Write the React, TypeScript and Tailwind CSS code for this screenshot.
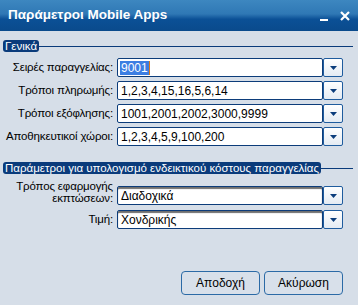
import React from "react";

const font = { fontFamily: '"Liberation Sans", Arial, sans-serif' };

function DropButton() {
  return (
    <div className="w-[20px] h-full flex items-center justify-center border border-[#1f5c9e] rounded-[2px] bg-[linear-gradient(180deg,#ffffff_0%,#e4ebf3_100%)]">
      <svg width="7" height="4" viewBox="0 0 7 4">
        <path d="M0 0 H7 L3.5 4 Z" fill="#0b3d7c" />
      </svg>
    </div>
  );
}

function Combo({
  value,
  selected,
  shaded,
}: {
  value: string;
  selected?: boolean;
  shaded?: boolean;
}) {
  return (
    <div className="flex h-[19px] w-[226px]">
      <div
        className={
          "flex-1 flex items-center pl-[2px] bg-white border border-[#0c3c7a] rounded-[2px] text-[12px] text-black " +
          (shaded ? "shadow-[inset_0_2px_1px_#6f6f6f]" : "")
        }
      >
        {selected ? (
          <>
            <span className="bg-[#3c7ee2] text-white leading-[14px] px-[1px]">{value}</span>
            <span className="w-[1px] h-[14px] bg-[#d9771c]" />
          </>
        ) : (
          <span className="leading-[14px] pl-[1px]">{value}</span>
        )}
      </div>
      <DropButton />
    </div>
  );
}

function Row({
  label,
  children,
  tall,
}: {
  label: React.ReactNode;
  children: React.ReactNode;
  tall?: boolean;
}) {
  return (
    <div className="flex items-end">
      <div
        className={
          "w-[115px] pr-[2px] flex justify-end text-right text-[11.5px] tracking-[-0.15px] text-black whitespace-nowrap " +
          (tall ? "leading-[12px] pb-[1px]" : "leading-[13px] pb-[3px]")
        }
      >
        <span>{label}</span>
      </div>
      <div className="ml-[2px]">{children}</div>
    </div>
  );
}

function Section({ title }: { title: string }) {
  return (
    <div className="flex items-center pl-[3px] pr-[5px]">
      <span className="bg-[#0a3b7b] text-white text-[11.5px] leading-[12px] px-[2px] rounded-[3px] whitespace-nowrap">
        {title}
      </span>
      <div className="flex-1 h-[1px] bg-[#0a3b7b]" />
    </div>
  );
}

export default function App() {
  return (
    <div className="w-[358px] h-[305px] flex flex-col bg-[#d6dee8] overflow-hidden" style={font}>
      <div className="h-[31px] flex items-center justify-between pl-[8px] pr-[8px] bg-[linear-gradient(180deg,#3d87c0_0%,#2f78b5_45%,#0b5096_62%,#0a4a8c_100%)]">
        <span className="text-white font-bold text-[13.5px]">Παράμετροι Mobile Apps</span>
        <div className="flex items-center gap-[12px]">
          <div className="w-[8px] h-[2px] bg-white mt-[8px]" />
          <svg width="10" height="10" viewBox="0 0 10 10">
            <path d="M1 1 L9 9 M9 1 L1 9" stroke="white" strokeWidth="2.2" />
          </svg>
        </div>
      </div>

      <div className="mt-[9px]">
        <Section title="Γενικά" />
      </div>
      <div className="mt-[6px] flex flex-col gap-[4px]">
        <Row label="Σειρές παραγγελίας:">
          <Combo value="9001" selected />
        </Row>
        <Row label="Τρόποι πληρωμής:">
          <Combo value="1,2,3,4,15,16,5,6,14" />
        </Row>
        <Row label="Τρόποι εξόφλησης:">
          <Combo value="1001,2001,2002,3000,9999" />
        </Row>
        <Row label="Αποθηκευτικοί χώροι:">
          <Combo value="1,2,3,4,5,9,100,200" />
        </Row>
      </div>

      <div className="mt-[16px]">
        <Section title="Παράμετροι για υπολογισμό ενδεικτικού κόστους παραγγελίας" />
      </div>
      <div className="mt-[6px] flex flex-col gap-[5px]">
        <Row
          tall
          label={
            <>
              Τρόπος εφαρμογής
              <br />
              εκπτώσεων:
            </>
          }
        >
          <Combo value="Διαδοχικά" shaded />
        </Row>
        <Row label="Τιμή:">
          <Combo value="Χονδρικής" shaded />
        </Row>
      </div>

      <div className="flex-1" />
      <div className="flex justify-end gap-[4px] pr-[15px] pb-[10px]">
        <button className="w-[79px] h-[24px] border border-[#2b6aa6] rounded-[4px] text-[12px] text-black bg-[#d8e0ea]">
          Αποδοχή
        </button>
        <button className="w-[79px] h-[24px] border border-[#2b6aa6] rounded-[4px] text-[12px] text-black bg-[#d8e0ea]">
          Ακύρωση
        </button>
      </div>
    </div>
  );
}
